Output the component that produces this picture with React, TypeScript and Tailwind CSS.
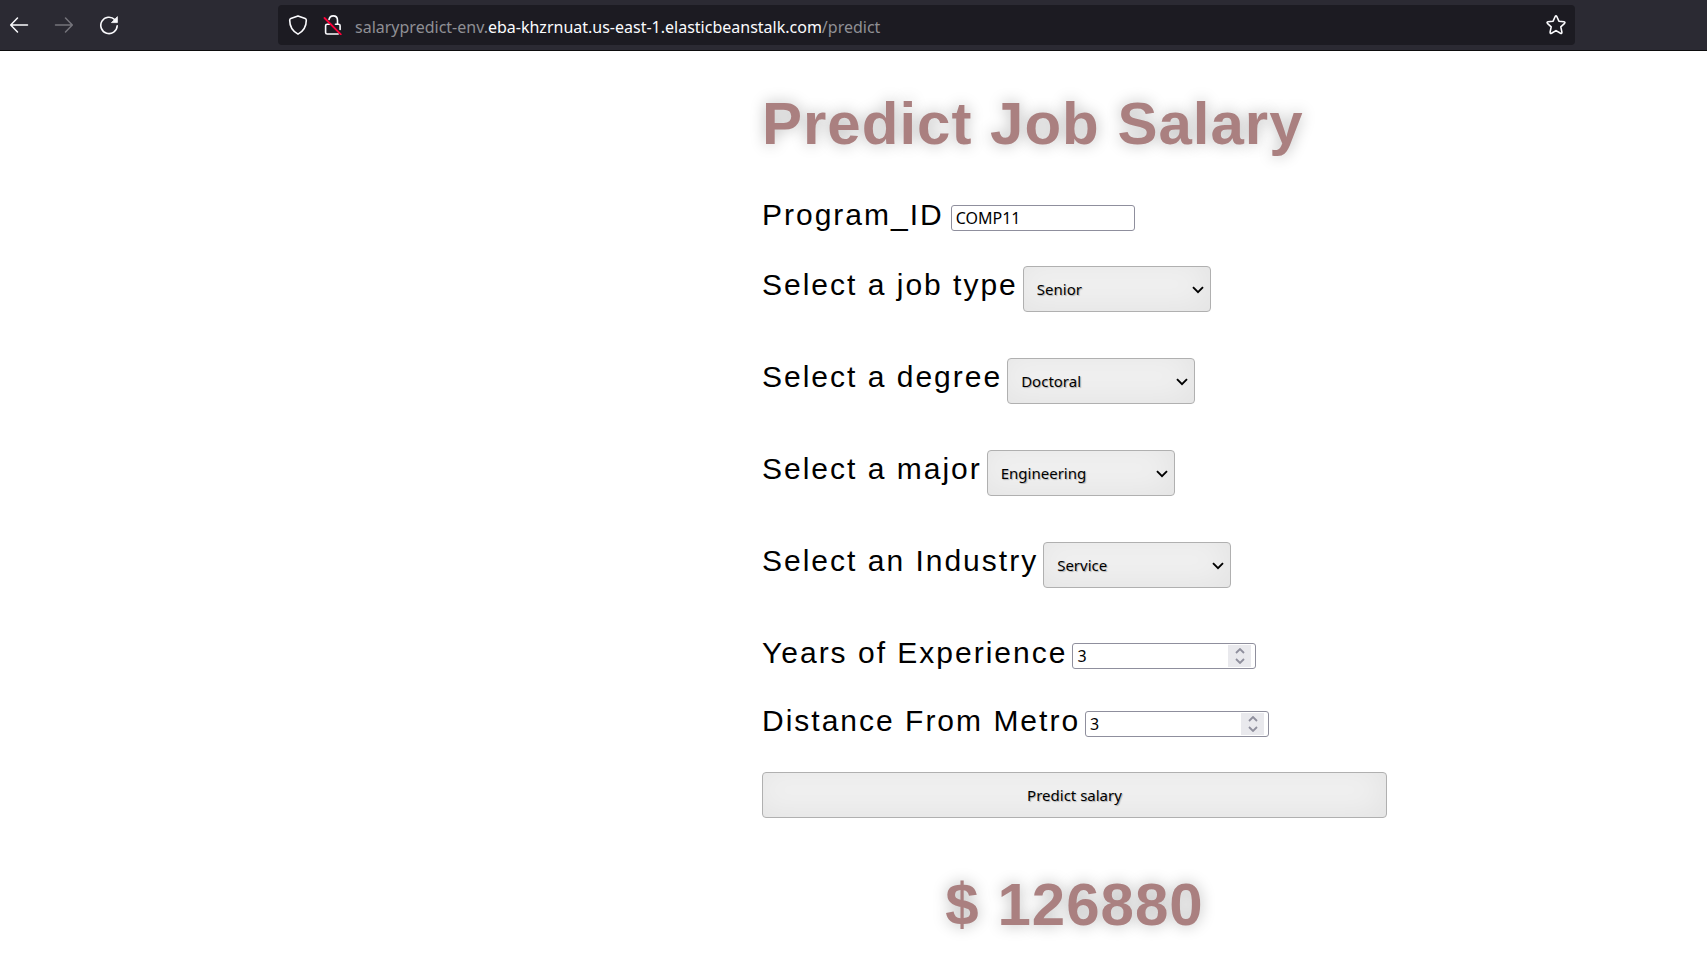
import React from "react";

const labelClass =
  "font-['Liberation_Sans',Arial,sans-serif] text-[30px] leading-[34px] tracking-[2px] text-black whitespace-nowrap";

const fieldFont = "font-['Noto_Sans',sans-serif] text-[16px]";
const raisedFont = "font-['Noto_Sans',sans-serif] text-[15px]";

const raised =
  "rounded-[4px] border border-[#b0b0b0] bg-[#f0f0f0] shadow-[inset_-5px_-5px_30px_rgba(0,0,0,0.05)] [text-shadow:1px_1px_1px_rgba(0,0,0,0.25)] text-black";

function BrowserBar() {
  return (
    <header className="flex h-[51px] items-center border-b border-[#0c0c0d] bg-[#2b2a33] pl-[9px]">
      <nav className="flex items-center gap-[25px] text-[#fbfbfe]" aria-label="Browser">
        <button type="button" aria-label="Back" className="size-5">
          <svg viewBox="0 0 20 20" className="size-5" fill="none" stroke="currentColor" strokeWidth="1.5" strokeLinecap="round" strokeLinejoin="round">
            <path d="M18.500 10H2M8.500 3L1.700 10l6.800 7" />
          </svg>
        </button>
        <button type="button" aria-label="Forward" className="size-5 text-[#75747b]">
          <svg viewBox="0 0 20 20" className="size-5" fill="none" stroke="currentColor" strokeWidth="1.5" strokeLinecap="round" strokeLinejoin="round">
            <path d="M1.500 10H18M11.500 3l6.800 7-6.800 7" />
          </svg>
        </button>
        <button type="button" aria-label="Reload" className="size-5">
          <svg viewBox="0 0 20 20" className="size-5" fill="none" stroke="currentColor" strokeWidth="1.6" strokeLinecap="round">
            <path d="M15.800 4.600A8.200 8.200 0 1 0 18.200 10.800" />
            <path d="M18.400 2v5.600h-5.600z" fill="currentColor" strokeWidth="0.8" strokeLinejoin="round" />
          </svg>
        </button>
      </nav>
      <div className="ml-[159px] mr-[132px] flex h-10 flex-1 items-center rounded-[4px] bg-[#1c1b22] pl-[10px] pr-[9px]">
        <svg viewBox="0 0 20 20" className="size-5" fill="none" stroke="#fbfbfe" strokeWidth="1.6" strokeLinejoin="round">
          <path d="M10 .9L17.200 3.600Q18.300 4 18.300 5.200C18.300 11.600 15.400 16.200 10 19.100 4.600 16.200 1.700 11.600 1.700 5.200Q1.700 4 2.800 3.600z" />
        </svg>
        <svg viewBox="0 0 20 20" className="ml-[15px] size-5" fill="none" stroke="#fbfbfe" strokeWidth="1.6" strokeLinejoin="round" strokeLinecap="round">
          <path d="M6 4.500C6.500 2.300 8 .9 10.200.9c2.600 0 4.300 1.900 4.300 4.500v3.800M12.500 9.200h3c1 0 1.600.6 1.600 1.600v3.600M7.500 9.200H4.200c-1 0-1.600.6-1.600 1.600v6.600c0 1 .6 1.600 1.600 1.600h11" />
          <path d="M1.500 3l16.300 16.300" stroke="#ff0039" strokeWidth="1.800" />
        </svg>
        <p className="ml-3 flex-1 whitespace-pre pt-[3px] font-['Noto_Sans',sans-serif] text-[16px] leading-5 text-[#8f8f94]">
          salarypredict-env.<span className="text-[#fbfbfe]">eba-khzrnuat.us-east-1.elasticbeanstalk.com</span>/predict
        </p>
        <button type="button" aria-label="Bookmark this page" className="size-5">
          <svg viewBox="0 0 20 20" className="size-5" fill="none" stroke="#fbfbfe" strokeWidth="1.600" strokeLinejoin="round">
            <path d="M9.200 1.500Q10 .3 10.800 1.500L12.900 6.200 18 6.800Q19.500 7.200 18.600 8.300L14.800 11.800 15.900 17.200Q15.900 18.900 14.500 18.300L10 15.600 5.500 18.300Q4.100 18.900 4.100 17.200L5.200 11.800 1.400 8.300Q.5 7.200 2 6.800L7.100 6.200z" />
          </svg>
        </button>
      </div>
    </header>
  );
}

function SelectRow({ id, label, options }: { id: string; label: string; options: string[] }) {
  return (
    <div className="flex h-[46px] gap-[5px]">
      <label htmlFor={id} className={`${labelClass} pt-[2px]`}>{label}</label>
      <div className="relative">
        <select id={id} className={`${raisedFont} ${raised} h-[46px] w-[188px] appearance-none px-[13px]`}>
          {options.map((o) => (
            <option key={o}>{o}</option>
          ))}
        </select>
        <svg viewBox="0 0 12 8" className="pointer-events-none absolute right-[7px] top-[20px] h-2 w-3" fill="none" stroke="#000" strokeWidth="1.900">
          <path d="M1 1.200l5 5 5-5" />
        </svg>
      </div>
    </div>
  );
}

const fieldBox = "h-[26px] w-[184px] rounded-[3px] border border-[#8f8f9d] bg-white pl-1 text-black outline-none";

function NumberRow({ id, label, value }: { id: string; label: string; value: number }) {
  return (
    <div className="flex h-[34px] gap-[5px]">
      <label htmlFor={id} className={labelClass}>{label}</label>
      <div className="relative mt-[7px]">
        <input
          id={id}
          type="number"
          defaultValue={value}
          className={`${fieldBox} ${fieldFont} block pr-8 [appearance:textfield] [&::-webkit-inner-spin-button]:appearance-none`}
        />
        <span className="pointer-events-none absolute right-[5px] top-[2px] flex h-[22px] w-[23px] items-center justify-center bg-[#e9e9ed]">
          <svg viewBox="0 0 10 16" className="h-4 w-[10px]" fill="none" stroke="#8f8f9d" strokeWidth="1.800">
            <path d="M1 5l4-4 4 4M1 11l4 4 4-4" />
          </svg>
        </span>
      </div>
    </div>
  );
}

const display =
  "font-['Liberation_Sans',Arial,sans-serif] text-[60px] font-bold leading-[68px] tracking-[1px] text-[#aa8080] whitespace-nowrap [text-shadow:0_0_15px_rgba(0,0,0,0.28)]";

export default function App() {
  return (
    <div className="min-h-screen bg-white">
      <BrowserBar />
      <main className="grid grid-cols-[762fr_625fr_320fr]">
        <form className="col-start-2 flex min-w-0 flex-col" onSubmit={(e) => e.preventDefault()}>
          <h1 className={`${display} mt-[39px]`}>Predict Job Salary</h1>
          <div className="mt-10 flex h-[34px] gap-[7px]">
            <label htmlFor="program" className={labelClass}>Program_ID</label>
            <input id="program" type="text" defaultValue="COMP11" className={`${fieldBox} ${fieldFont} mt-[7px]`} />
          </div>
          <div className="mt-[34px] flex flex-col gap-[46px]">
            <SelectRow id="job" label="Select a job type" options={["Senior", "Junior", "Manager"]} />
            <SelectRow id="degree" label="Select a degree" options={["Doctoral", "Masters", "Bachelors"]} />
            <SelectRow id="major" label="Select a major" options={["Engineering", "Math", "Physics"]} />
            <SelectRow id="industry" label="Select an Industry" options={["Service", "Finance", "Health"]} />
          </div>
          <div className="mt-12 flex flex-col gap-[34px]">
            <NumberRow id="years" label="Years of Experience" value={3} />
            <NumberRow id="distance" label="Distance From Metro" value={3} />
          </div>
          <button type="submit" className={`${raisedFont} ${raised} mt-[34px] h-[46px] w-full`}>Predict salary</button>
          <output className={`${display} mt-[53px] block text-center`}>$ 126880</output>
        </form>
      </main>
    </div>
  );
}
